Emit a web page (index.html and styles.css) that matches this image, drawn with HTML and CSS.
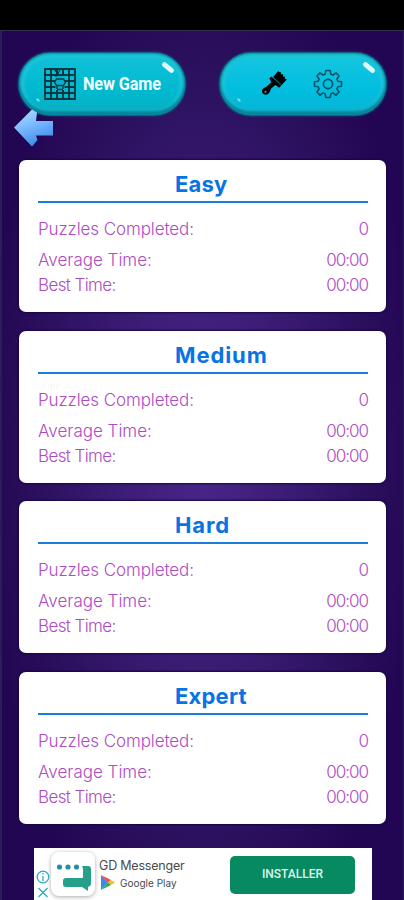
FILE: index.html
```
<!DOCTYPE html>
<html lang="en">
<head>
<meta charset="utf-8">
<title>Statistics</title>
<link rel="stylesheet" href="styles.css">
</head>
<body>
<div class="status"></div>
<main class="screen">
  <header class="toolbar">
    <div class="pill">
      <svg class="grid-icon" viewBox="0 0 32 32"><g fill="none" stroke="#063844" stroke-width="1.9"><path d="M1 1h30v30H1zM7 1v30M13 1v30M19 1v30M25 1v30M1 7h30M1 13h30M1 19h30M1 25h30"/></g><path d="M11.500 8h9v14h-9z" fill="#00b5cb"/><g fill="none" stroke="#063844" stroke-width="1.4"><path d="M10 1l5 6-4 1M16 2l-3 5M12.500 11h7l2 3-2 3.500h-7l-2-3.500zM13 21.500h6M13 18v3M19 18v3"/></g></svg>
      <span class="pill-label">New Game</span>
      <i class="shine"></i><i class="glint"></i>
    </div>
    <div class="pill pill-tools">
      <svg class="brush-icon" viewBox="0 0 24 24"><path d="M15.500 0q1.200 1.700 2.800 1l-.3 2.200 2.300-.2-.2 2.400 2-.1-.2 2.200 2 .5-5.500 6L10.500 6z"/><path d="M7 7l2-1.800L18.500 14l-2 2-3.700-2.500-4 3.300-2 4.200q-2 2.500-5 1.300-2.800-1.800-1.500-4.500.8-1.500 4.200-3L9 10.800z"/><path d="M10.300 5.500l8 7.500" stroke="#058da5" stroke-width=".7"/><circle cx="3.300" cy="20" r="1" fill="#00bcdc"/></svg>
      <svg class="gear-icon" viewBox="-15 -15 30 30"><g fill="none" stroke="#075364" stroke-width="1.600" stroke-linejoin="round"><path d="M-2.800-9.800L-2.200-13.500H2.200L2.800-9.800Q3.900-9.500 4.950-8.910L7.990-11.100 11.100-7.990 8.910-4.950Q9.500-3.900 9.800-2.800L13.500-2.200V2.200L9.800 2.800Q9.500 3.900 8.910 4.950L11.100 7.990 7.990 11.100 4.950 8.910Q3.900 9.500 2.800 9.800L2.200 13.500H-2.200L-2.800 9.800Q-3.900 9.500-4.950 8.910L-7.990 11.100-11.100 7.990-8.910 4.950Q-9.500 3.900-9.800 2.800L-13.500 2.200V-2.200L-9.800-2.800Q-9.500-3.900-8.910-4.950L-11.100-7.990-7.990-11.100-4.950-8.910Q-3.900-9.500-2.800-9.800z"/><circle r="4.600"/></g></svg>
      <i class="shine"></i><i class="glint"></i>
    </div>
    <svg class="back" viewBox="0 0 40 38"><defs><linearGradient id="arrow" x1="0" y1="0" x2=".4" y2="1"><stop offset="0" stop-color="#b4ddff"/><stop offset=".5" stop-color="#7bbcff"/><stop offset="1" stop-color="#438eea"/></linearGradient></defs><path d="M.500 18.500L18.500.500l5 3-1 8.500h17v14.500H22.500l1.500 4.500-5.500 6.500z" fill="url(#arrow)"/></svg>
  </header>
  <section class="cards">
    <article class="card"><h2 class="easy">Easy</h2><dl><dt class="puzzles">Puzzles Completed:</dt><dd>0</dd><dt>Average Time:</dt><dd>00:00</dd><dt class="best">Best Time:</dt><dd>00:00</dd></dl></article>
    <article class="card"><h2>Medium</h2><dl><dt class="puzzles">Puzzles Completed:</dt><dd>0</dd><dt>Average Time:</dt><dd>00:00</dd><dt class="best">Best Time:</dt><dd>00:00</dd></dl></article>
    <article class="card"><h2>Hard</h2><dl><dt class="puzzles">Puzzles Completed:</dt><dd>0</dd><dt>Average Time:</dt><dd>00:00</dd><dt class="best">Best Time:</dt><dd>00:00</dd></dl></article>
    <article class="card"><h2 class="expert">Expert</h2><dl><dt class="puzzles">Puzzles Completed:</dt><dd>0</dd><dt>Average Time:</dt><dd>00:00</dd><dt class="best">Best Time:</dt><dd>00:00</dd></dl></article>
  </section>
  <footer class="ad">
    <svg class="ad-controls" viewBox="0 0 14 30"><g fill="none" stroke="#27a9c3" stroke-width="1.300"><circle cx="7" cy="7" r="5.800"/><path d="M7 6v5M7 3v1.500M2.500 18l9 9M11.500 18l-9 9"/></g></svg>
    <div class="app-icon"><svg viewBox="0 0 44 44"><g fill="#268fa8"><circle cx="8.500" cy="15" r="2.600"/><circle cx="17" cy="15" r="2.600"/><circle cx="25.500" cy="15" r="2.600"/></g><path d="M31 14h6q3 0 3 3v15q0 2-3 3v4l-6-4H15q-3 0-3-3v-3q0-3 3-3h16q1 0 1-1v-7q0-3-1-4z" fill="#26a08b"/></svg></div>
    <div class="ad-copy"><span class="ad-name">GD Messenger</span><span class="store"><svg viewBox="0 0 14 15"><path d="M0 0v15l7-7.500z" fill="#3a8bea"/><path d="M0 0l10 5-3 2.500z" fill="#ed4b49"/><path d="M10 5l4 2.500-4 2.500-3-2.500z" fill="#f8be25"/><path d="M0 15l10-5-3-2.500z" fill="#30a65b"/></svg><span>Google Play</span></span></div>
    <div class="install">INSTALLER</div>
  </footer>
</main>
</body>
</html>
```
FILE: styles.css
```
* { box-sizing: border-box; }
body { margin: 0; width: 404px; height: 900px; overflow: hidden; background: #000; font-family: Inter, sans-serif; }
.status { height: 30px; background: #000; }
.screen { height: 870px; display: flex; flex-direction: column; border-top: 1px solid #343050; border-left: 2px solid #272057; border-right: 1px solid #272057; background: radial-gradient(ellipse 220px 520px at 50% 49%, #49268a 0%, #3b1c75 40%, #2b105e 75%, #230653 100%); }
.toolbar { position: relative; flex: none; height: 129px; padding: 21px 16px 0; display: flex; justify-content: space-between; align-items: flex-start; }
.pill { position: relative; width: 168px; height: 64px; border-radius: 32px; display: flex; align-items: center; padding: 0 0 1px 25px; background: linear-gradient(#12c1d8, #00bad0 60%, #09adc2); border: 1px solid #086880; box-shadow: inset 0 0 2px 1px #078ca5, inset 0 -4px 3px #087f99, inset 0 0 3px 5px #1dc4d7, 0 0 2px #087085; }
.pill-tools { padding-left: 42px; background: linear-gradient(#17c7df, #00bddf 60%, #08b4d3); }
.grid-icon { flex: none; width: 32px; height: 32px; }
.pill-label { margin-left: 7px; font: 700 18.500px/24px Roboto, sans-serif; color: #edfcff; white-space: nowrap; transform: scaleX(.88); transform-origin: left; letter-spacing: -.15px; }
.brush-icon { width: 25px; height: 25px; }
.gear-icon { width: 30px; height: 30px; margin-left: 26px; }
.shine { position: absolute; right: 10px; top: 12px; width: 14px; height: 5px; border-radius: 3px; background: #dcfcff; transform: rotate(39deg); }
.glint { position: absolute; left: 17px; bottom: 14px; width: 4px; height: 2px; border-radius: 2px; background: #78e4ef; transform: rotate(40deg); }
.back { position: absolute; left: 11px; top: 78px; width: 41px; height: 38px; }
.cards { display: flex; flex-direction: column; gap: 18.600px; padding: 0 17px; }
.card { height: 152px; padding: 8px 18px 0 19px; border-radius: 7px; background: #fff; box-shadow: 0 0 2px 1px #180542; }
.card h2 { margin: 0; height: 35px; padding-left: 137px; border-bottom: 2px solid #1b7ddb; font-size: 22px; line-height: 32px; font-weight: 700; letter-spacing: .9px; color: #0874e4; }
.card h2.easy { letter-spacing: .2px; }
.card h2.expert { letter-spacing: .2px; }
.card dl { margin: 12px 0 0; display: grid; grid-template-columns: 1fr auto; grid-template-rows: 31px 25px 25px; font-size: 17px; line-height: 29px; font-weight: 300; color: #ae4bc2; }
.card dt { white-space: nowrap; }
.card .puzzles { letter-spacing: -.1px; }
.card .best { letter-spacing: -.6px; }
.card dd { margin: 0; text-align: right; letter-spacing: -1px; }
.ad { width: 338px; height: 53px; margin: 24px 0 0 32px; display: flex; align-items: flex-start; background: #fff; }
.ad-controls { width: 14px; height: 30px; margin: 22px 0 0 2px; }
.app-icon { width: 44px; height: 44px; margin: 4px 0 0 1px; border-radius: 8px; background: #fff; box-shadow: 0 1px 4px #aaa; }
.app-icon svg { display: block; width: 44px; height: 44px; }
.ad-copy { width: 135px; padding: 10px 0 0 4px; color: #4a4a4a; display: flex; flex-direction: column; }
.ad-name { font-size: 12.500px; line-height: 16px; white-space: nowrap; letter-spacing: -.2px; }
.store { display: flex; align-items: center; gap: 5px; margin: 1px 0 0 2px; font-size: 10px; line-height: 16px; white-space: nowrap; }
.store svg { width: 14px; height: 15px; }
.install { width: 125px; height: 38px; margin: 8px 0 0 0; border-radius: 5px; background: #078a61; color: #dff5eb; text-align: center; font: 500 12px/37px Roboto, sans-serif; }
```
